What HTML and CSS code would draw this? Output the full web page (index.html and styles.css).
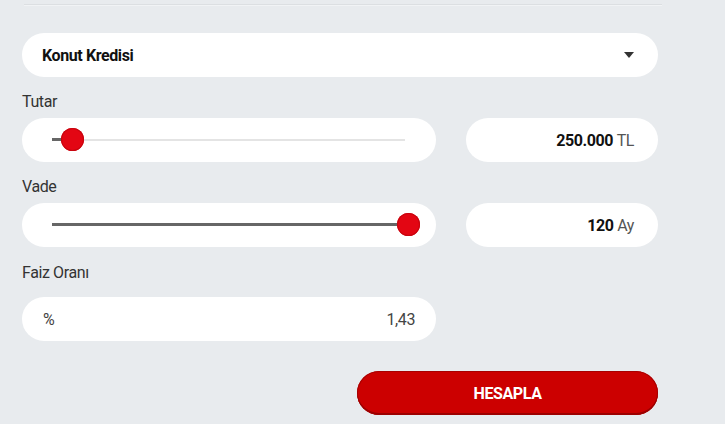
FILE: index.html
```html
<!DOCTYPE html>
<html lang="tr">
<head>
<meta charset="utf-8">
<title>Kredi Hesaplama</title>
<link rel="stylesheet" href="styles.css">
</head>
<body>
<div class="page">
  <div class="topline"></div>
  <form class="calc">
    <div class="select">
      <span class="select-text">Konut Kredisi</span>
      <svg class="caret" width="10" height="6" viewBox="0 0 10 6"><path d="M0 0H10L5 6Z" fill="#333"/></svg>
    </div>

    <div class="label">Tutar</div>
    <div class="row">
      <div class="box slider-box">
        <div class="track">
          <div class="fill" style="width:20px"></div>
          <div class="thumb" style="left:20px"></div>
        </div>
      </div>
      <div class="box value-box"><b>250.000</b>&nbsp;<span class="unit">TL</span></div>
    </div>

    <div class="label">Vade</div>
    <div class="row">
      <div class="box slider-box">
        <div class="track track-full">
          <div class="fill" style="width:100%"></div>
          <div class="thumb" style="left:356px"></div>
        </div>
      </div>
      <div class="box value-box"><b>120</b>&nbsp;<span class="unit">Ay</span></div>
    </div>

    <div class="label label-faiz">Faiz Oranı</div>
    <div class="row">
      <div class="box rate-box"><span>%</span><span>1,43</span></div>
    </div>

    <div class="actions">
      <button type="button" class="btn">HESAPLA</button>
    </div>
  </form>
</div>
</body>
</html>
```

FILE: styles.css
```css
* { box-sizing: border-box; }
html, body { margin: 0; padding: 0; }
body {
  background: #e8ebee;
  font-family: Roboto, "Liberation Sans", Arial, sans-serif;
  color: #333;
  width: 725px;
  height: 424px;
  overflow: hidden;
  letter-spacing: -0.4px;
}
.page { padding: 4px 0 0 22px; }
.topline {
  margin-left: 2px;
  width: 638px;
  height: 1px;
  background: #dcdfe2;
  box-shadow: 0 1px 0 #f1f3f5;
}
.calc { width: 636px; margin-top: 28px; }
.select {
  height: 44px;
  background: #fff;
  border-radius: 22px;
  display: flex;
  align-items: center;
  justify-content: space-between;
  padding: 0 24px 0 20px;
}
.select-text { font-weight: bold; font-size: 16px; color: #111; }
.caret { display: block; }
.label {
  font-size: 16px;
  line-height: 18px;
  padding-top: 16px;
  margin-bottom: 7px;
  color: #333;
}
.label-faiz { padding-top: 17px; margin-bottom: 15px; }
.row {
  display: grid;
  grid-template-columns: 414px 192px;
  column-gap: 30px;
}
.box {
  height: 44px;
  background: #fff;
  border-radius: 22px;
}
.slider-box {
  display: flex;
  align-items: center;
  padding: 0 31px 0 30px;
}
.track {
  position: relative;
  flex: 1;
  height: 2px;
  background: #e4e4e4;
}
.fill {
  position: absolute;
  left: 0;
  top: -1px;
  height: 3px;
  background: #666;
}
.thumb {
  position: absolute;
  top: 1px;
  width: 23px;
  height: 23px;
  margin: -12px 0 0 -11.5px;
  border-radius: 50%;
  background: #e30613;
  box-shadow: inset 0 0 0 1px #c8050f;
}
.value-box {
  display: flex;
  align-items: center;
  justify-content: flex-end;
  padding-right: 24px;
  font-size: 16px;
}
.value-box b { color: #111; }
.unit { color: #555; }
.rate-box {
  display: flex;
  align-items: center;
  justify-content: space-between;
  padding: 0 21px 0 21px;
  font-size: 16px;
  color: #444;
}
.actions {
  display: flex;
  justify-content: flex-end;
  margin-top: 30px;
}
.btn {
  width: 301px;
  height: 44px;
  border-radius: 22px;
  border: 0;
  background: #cc0000;
  box-shadow: inset 0 -2px 0 #9c0000, inset 0 0 0 1px #a80000;
  color: #fff;
  font-family: inherit;
  letter-spacing: inherit;
  font-weight: bold;
  font-size: 16px;
  padding: 0;
}
```
